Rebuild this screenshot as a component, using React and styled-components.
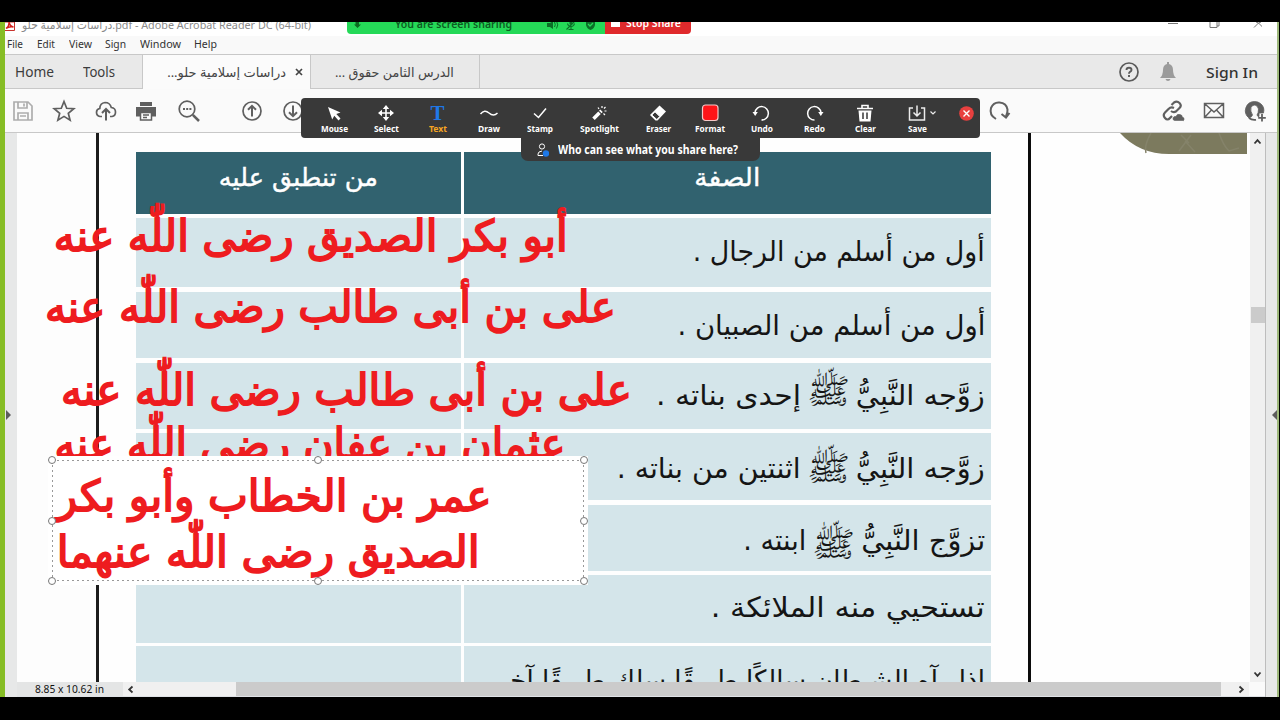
import React, { useLayoutEffect, useRef } from "react"
import styled, { createGlobalStyle } from "styled-components";

const MENU = [
  { label: 'File', w: 16, gap: 14 },
  { label: 'Edit', w: 18, gap: 14 },
  { label: 'View', w: 23, gap: 13 },
  { label: 'Sign', w: 21, gap: 14 },
  { label: 'Window', w: 41, gap: 13 },
  { label: 'Help', w: 23, gap: 0 },
]

const ROWS = [
  { h: 69, mt: 4, pad: 16, parts: [{ t: 'أول من أسلم من الرجال .', w: 292 }] },
  { h: 66, mt: 5, pad: 16, parts: [{ t: 'أول من أسلم من الصبيان .', w: 308 }] },
  { h: 66, mt: 5, pad: 15, parts: [{ t: 'زوَّجه النَّبِيُّ', w: 129 }, { t: 'ﷺ', w: 43, mark: true, mr: 6, lift: 5 }, { t: 'إحدى بناته .', w: 145, mr: 6 }] },
  { h: 67, mt: 4, pad: 18, parts: [{ t: 'زوَّجه النَّبِيُّ', w: 129 }, { t: 'ﷺ', w: 43, mark: true, mr: 6, lift: 1 }, { t: 'اثنتين من بناته .', w: 184, mr: 6 }] },
  { h: 66, mt: 5, pad: 18, parts: [{ t: 'تزوَّج النَّبِيُّ', w: 124 }, { t: 'ﷺ', w: 43, mark: true, mr: 6, lift: -3 }, { t: 'ابنته .', w: 63, mr: 6 }] },
  { h: 68, mt: 4, pad: 15, parts: [{ t: 'تستحيي منه الملائكة .', w: 274 }] },
  { h: 70, mt: 3, pad: 17, parts: [{ t: 'إذا رآه الشيطان سالكًا طريقًا سلك طريقًا آخر', w: 489 }] },
]

const NOTES = [
  { t: 'أبو بكر الصديق رضى اللّٰه عنه', x: 54, y: 208, w: 514 },
  { t: 'على بن أبى طالب رضى اللّٰه عنه', x: 45, y: 279, w: 571 },
  { t: 'على بن أبى طالب رضى اللّٰه عنه', x: 61, y: 362, w: 571 },
  { t: 'عثمان بن عفان رضى اللّٰه عنه', x: 54, y: 416, w: 511 },
]

// squeezes or stretches one line of text to an exact width
const FitText = ({ w, rtl, children, className }) => {
  const ref = useRef(null)

  useLayoutEffect(() => {
    const el = ref.current
    el.style.transform = 'none'
    const real = el.getBoundingClientRect().width
    if (real) el.style.transform = `scaleX(${w / real})`
  }, [w, children])

  return (
    <FitBox $w={w} className={className} dir={rtl ? 'rtl' : 'ltr'}>
      <FitInner ref={ref} $rtl={rtl}>{children}</FitInner>
    </FitBox>
  )
}

const TitleBar = () => (
  <Title>
    <PdfIcon width="10" height="9" viewBox="0 0 10 9">
      <path d="M0 0H9.500V8.500H0" fill="#fff" stroke="#c8322d" />
      <path d="M1 6.500Q4.500 4 4 0Q5 4.500 8.500 5Q4.500 4 1 6.500" stroke="#d3211c" strokeWidth="1.500" fill="none" />
    </PdfIcon>
    <TitleText w={289}>دراسات إسلامية حلو.pdf - Adobe Acrobat Reader DC (64-bit)</TitleText>
    <WindowButtons width="94" height="14" viewBox="0 0 94 14">
      <path d="M0 1.500H10M42 0V5.500H49V0M49 4H51V0M86 5.500L90.500 1L95 5.500M88 0L90.500 1L93 0" stroke="#777" fill="none" />
    </WindowButtons>
  </Title>
)

const SharingBar = () => (
  <Sharing>
    <SharingGreen>
      <svg width="9" height="8" viewBox="0 0 9 8"><path d="M2.500 0H6V2.500H8L4.500 6L1 2.500H2.500Z" fill="#0a6a20" /></svg>
      <SharingText w={117}>You are screen sharing</SharingText>
      <ShareIcons width="50" height="10" viewBox="0 0 50 10">
        <path d="M0 1H3L6 -1V7L3 5H0Z" fill="#0b6e27" />
        <path d="M7.500 0Q9 3 7.500 5M9.500 -1Q12 3 9.500 6.500" stroke="#0b6e27" fill="none" />
        <path d="M22.500 -1H25.500V2Q24 4 22.500 2Z" fill="#0b6e27" />
        <path d="M20.500 1.500Q21 4.500 24 4.500T27.500 1.500M24 4.500V7M21.500 7.500H26.500M19.500 7.500L28 -1" stroke="#0b6e27" strokeWidth="1.100" fill="none" />
        <path d="M39 -2H48V3Q47 7 43.500 8Q40 7 39 3Z" fill="#0b6e27" />
        <path d="M41 2L43 4L46 1" stroke="#25d958" strokeWidth="1.300" fill="none" />
      </ShareIcons>
    </SharingGreen>
    <SharingRed>
      <StopSquare />
      <StopText w={55}>Stop Share</StopText>
    </SharingRed>
  </Sharing>
)

const Tabs = () => (
  <TabStrip>
    <HomeArea>
      <BigLabel w={39}>Home</BigLabel>
      <BigLabel w={32}>Tools</BigLabel>
    </HomeArea>
    <Tab $w={168} $active>
      <TabText w={119} rtl>دراسات إسلامية حلو...</TabText>
      <svg width="8" height="8" viewBox="0 0 8 8"><path d="M1 1L7 7M7 1L1 7" stroke="#444" strokeWidth="1.700" /></svg>
    </Tab>
    <Tab $w={169}>
      <TabText w={119} rtl>الدرس الثامن حقوق ...</TabText>
    </Tab>
    <TabRest>
      <svg width="20" height="20" viewBox="0 0 20 20" fill="none" stroke="#5a5a5a">
        <circle cx="10" cy="10" r="9" strokeWidth="1.700" />
        <path d="M7.500 8Q7.500 5.800 10 5.800T12.500 8Q12.500 9 11 9.800Q10 10.400 10 11.800M10 13V15" strokeWidth="1.900" />
      </svg>
      <svg width="16" height="19" viewBox="0 0 16 19" fill="#9b9b9b">
        <path d="M7 0H9V2Q13 3 13 8Q13 13 16 16H0Q3 13 3 8Q3 3 7 2ZM5.500 17H10.500Q10 19 8 19T5.500 17Z" />
      </svg>
      <SignIn w={52}>Sign In</SignIn>
    </TabRest>
  </TabStrip>
)

const MainTools = () => (
  <ToolRow>
    <Icon $mr={17} $dim>
      <path d="M3 3H17L21 7V21H3ZM7 3V9H16V3M13 4.500V7.500M7 21V14H17V21M9 17H15" />
    </Icon>
    <Icon $mr={18}><path d="M12 2.500L14.700 9.300L21.800 9.700L16.300 14.300L18.100 21.200L12 17.400L5.900 21.200L7.700 14.300L2.200 9.700L9.300 9.300Z" /></Icon>
    <Icon $mr={16}>
      <path d="M8 17.500H6Q2.500 17 2.500 13.300Q2.500 10 5.800 9.500Q6 4 11 3.500Q16 3.500 17.300 8.500Q21.500 9 21.500 13Q21.500 17 18 17.500H16" />
      <path d="M12 21.500V10.500M8 14L12 10L16 14" strokeWidth="2" />
    </Icon>
    <Icon $mr={19}>
      <path d="M6 3H18V7H6Z" fill="#5f5f5f" stroke="none" />
      <path d="M2 8H22V17.500H18V13H6V17.500H2Z" fill="#5f5f5f" stroke="none" />
      <path d="M6.500 13.500H17.500V21H6.500ZM9 16H15M9 18.500H13" strokeWidth="1.500" />
    </Icon>
    <Icon $mr={39}>
      <circle cx="10" cy="10" r="7.800" />
      <path d="M15.800 15.800L22 22" strokeWidth="2.500" />
      <path d="M6 10H8M9.200 10H11.200M12.400 10H14.400" strokeWidth="2" />
    </Icon>
    <Icon $mr={17}><circle cx="12" cy="12" r="9" /><path d="M12 17.500V7M8 10.800L12 6.800L16 10.800" strokeWidth="2" /></Icon>
    <Icon $mr={682}><circle cx="12" cy="12" r="9" /><path d="M12 6.500V17M8 13.200L12 17.200L16 13.200" strokeWidth="2" /></Icon>
    <Icon $mr={150}><path d="M9 20Q2 16 4 9Q6.500 3 12.500 3.500Q19.500 4 20.500 10.500Q20.800 13.500 19 17.500M14.500 15L19 18.500L22.500 14" strokeWidth="2" /></Icon>
    <Icon $mr={17}>
      <path d="M10.500 6L13 3.500Q16 1.500 18.500 4T18.500 9L15 12.500Q12.500 14 10 12M13 9Q10 7.500 7.500 10L4 13.500Q1.500 16 4 19T9 19L11 17" strokeWidth="2.200" />
      <path d="M13.500 21.500Q11.500 21 12 19T15 17.500Q16 14.500 19 15.500T21 18Q23.500 18.500 23 20.500T21.500 21.500Z" fill="#5f5f5f" strokeWidth=".6" />
    </Icon>
    <Icon $mr={17}><path d="M2.500 4.500H21.500V18.500H2.500ZM3 5L12 13L21 5M3 18L9.500 11M21 18L14.500 11" strokeWidth="1.500" /></Icon>
    <Icon $mr={0}>
      <path d="M11.500 2.500A9.200 9.200 0 0 0 6 19Q9 18 9.500 16Q7 12 8 8.500Q9.500 5.500 12 6T15.500 10Q15.500 14 14 16L15 17.500H16V14H20.500Q22 8 17.500 4.500Q15 2.500 11.500 2.500Z" fill="#5f5f5f" strokeWidth=".8" />
      <path d="M6 19Q9 21.500 13 20.800M19 15V22.500M15.200 18.800H22.800" strokeWidth="1.800" />
    </Icon>
  </ToolRow>
)

const ZoomBar = () => (
  <ZoomPanel>
    <ZoomItem $w={52}>
      <ZIcon><path d="M4 4L16.500 9.500L12.300 11L16.500 15.500L14.500 17.500L10.300 12.800L8.200 16.500Z" fill="#fff" stroke="none" /></ZIcon>
      <ZoomLabel w={27}>Mouse</ZoomLabel>
    </ZoomItem>
    <ZoomItem $w={52}>
      <ZIcon><path d="M10 4V16M4 10H16" strokeWidth="1.600" /><path d="M10 2L13.200 6H6.800ZM10 18L6.800 14H13.200ZM2 10L6 6.800V13.200ZM18 10L14 13.200V6.800Z" fill="#fff" stroke="none" /></ZIcon>
      <ZoomLabel w={25}>Select</ZoomLabel>
    </ZoomItem>
    <ZoomItem $w={51}>
      <BigT>T</BigT>
      <ZoomLabel w={18} $on>Text</ZoomLabel>
    </ZoomItem>
    <ZoomItem $w={52}>
      <ZIcon><path d="M1.500 11Q5.500 6 10 10T18.500 10" strokeWidth="1.400" /></ZIcon>
      <ZoomLabel w={22}>Draw</ZoomLabel>
    </ZoomItem>
    <ZoomItem $w={50}>
      <ZIcon><path d="M4 10.500L8.500 14.500L16 5.500" strokeWidth="1.500" /></ZIcon>
      <ZoomLabel w={26}>Stamp</ZoomLabel>
    </ZoomItem>
    <ZoomItem $w={68}>
      <ZIcon>
        <path d="M4.500 15.800L10.500 9.800" strokeWidth="3.600" />
        <path d="M11.300 9L12.500 7.800" strokeWidth="3.600" />
        <path d="M9 4.500L10 6M13 3V5M16.500 4L15 5.500M15.500 8H17.500M14.500 10.500L16 12" strokeWidth="1.200" />
      </ZIcon>
      <ZoomLabel w={39}>Spotlight</ZoomLabel>
    </ZoomItem>
    <ZoomItem $w={50}>
      <ZIcon>
        <path d="M11.500 2.500L18 8.500L9.500 17.500H7.500L2 12Z" fill="#fff" stroke="none" />
        <path d="M7 8.800L11.800 13.500L8.800 16.500L3.800 12Z" fill="#393939" stroke="#fff" strokeWidth="1" />
      </ZIcon>
      <ZoomLabel w={25}>Eraser</ZoomLabel>
    </ZoomItem>
    <ZoomItem $w={54}>
      <ZIcon><rect x="2.500" y="2" width="15.500" height="15.500" rx="3" fill="#ff1418" stroke="#f5c9c9" strokeWidth="1.200" /></ZIcon>
      <ZoomLabel w={30}>Format</ZoomLabel>
    </ZoomItem>
    <ZoomItem $w={50}>
      <ZIcon><path d="M3 9.500A6.700 6.700 0 1 1 9.500 17" strokeWidth="1.500" /><path d="M.5 9H5.800L3.200 13Z" fill="#fff" stroke="none" /></ZIcon>
      <ZoomLabel w={22}>Undo</ZoomLabel>
    </ZoomItem>
    <ZoomItem $w={54}>
      <ZIcon><path d="M17 9.500A6.700 6.700 0 1 0 10.500 17" strokeWidth="1.500" /><path d="M19.500 9H14.200L16.800 13Z" fill="#fff" stroke="none" /></ZIcon>
      <ZoomLabel w={21}>Redo</ZoomLabel>
    </ZoomItem>
    <ZoomItem $w={48}>
      <ZIcon><path d="M2 5.500H18M7 5V2.500H13V5" strokeWidth="1.600" /><path d="M3.500 7.500H16.500L15.500 18.500H4.500Z" fill="#fff" stroke="none" /><path d="M8 9.500V16M12 9.500V16" stroke="#393939" strokeWidth="1.500" /></ZIcon>
      <ZoomLabel w={21}>Clear</ZoomLabel>
    </ZoomItem>
    <ZoomItem $w={56}>
      <SaveIcon width="34" height="20" viewBox="-7 0 34 20" fill="none" stroke="#ececec">
        <path d="M6 5H2.500V17H17.500V5H14M10 2.500V13M6.500 9.500L10 13L13.500 9.500" strokeWidth="1.500" />
        <path d="M23.500 8.500L26 11L28.500 8.500" strokeWidth="1.200" />
      </SaveIcon>
      <ZoomLabel w={19}>Save</ZoomLabel>
    </ZoomItem>
    <CloseIcon width="15" height="15" viewBox="0 0 15 15">
      <circle cx="7.500" cy="7.500" r="7.300" fill="#e8403f" />
      <path d="M4.500 4.500L10.500 10.500M10.500 4.500L4.500 10.500" stroke="#fff" strokeWidth="1.400" />
    </CloseIcon>
    <WhoCanSee>
      <svg width="14" height="14" viewBox="0 0 14 14" fill="none" stroke="#fff">
        <circle cx="7" cy="3.500" r="2.600" />
        <path d="M8 12.500H3V11Q3 8.500 7 8" />
        <circle cx="11" cy="10.500" r="3.200" fill="#1e78e6" stroke="none" />
      </svg>
      <WhoText w={180}>Who can see what you share here?</WhoText>
    </WhoCanSee>
  </ZoomPanel>
)

const Lesson = () => (
  <Page>
    <Corner width="130" height="22" viewBox="0 0 130 22">
      <path d="M1 0H128V21H50Q20 21 1 0Z" fill="#7c7a5e" />
      <path d="M32 0Q25 12 27 20M60 18L72 2M66 8L76 19M62 2L70 10M100 0Q104 12 110 18L120 15" stroke="#85836a" strokeWidth="1.500" fill="none" />
    </Corner>
    <Table>
      <Row $h={62} $mt={0}>
        <Head><HeadText w={159} rtl>من تنطبق عليه</HeadText></Head>
        <Head><HeadText w={66} rtl>الصفة</HeadText></Head>
      </Row>
      {ROWS.map((row, i) => (
        <Row key={i} $h={row.h} $mt={row.mt}>
          <Cell />
          <Cell dir="rtl" $pad={row.pad}>
            {row.parts.map((p, k) => p.mark
              ? <Mark key={k} w={p.w} rtl $mr={p.mr} $lift={p.lift}>{p.t}</Mark>
              : <Phrase key={k} w={p.w} rtl $mr={p.mr}>{p.t}</Phrase>)}
          </Cell>
        </Row>
      ))}
    </Table>
  </Page>
)

const HANDLES = [[0, 0], [50, 0], [100, 0], [0, 50], [100, 50], [0, 100], [50, 100], [100, 100]]

const Annotations = () => (
  <>
    {NOTES.map((n, i) => (
      <Note key={i} $x={n.x} $y={n.y}><RedText w={n.w} rtl>{n.t}</RedText></Note>
    ))}
    <TextBox>
      <Dotted>
        <RedText w={435} rtl>عمر بن الخطاب وأبو بكر</RedText>
        <RedText w={423} rtl>الصديق رضى اللّٰه عنهما</RedText>
        {HANDLES.map(([x, y]) => <Handle key={`${x}-${y}`} $x={x} $y={y} />)}
      </Dotted>
    </TextBox>
  </>
)

const App = () => {
  return (
    <Screen>
      <GlobalStyle />
      <Desktop>
        <Window>
          <TitleBar />
          <Menu>
            {MENU.map((m) => <MenuText key={m.label} w={m.w} $gap={m.gap}>{m.label}</MenuText>)}
          </Menu>
          <Tabs />
          <MainTools />
          <Body>
            <SidePanel $w={12}><Arrow /></SidePanel>
            <Center>
              <View>
                <Lesson />
                <VScroll>
                  <Chevron $turn={0} />
                  <VThumb />
                  <Chevron $turn={180} />
                </VScroll>
              </View>
              <Bottom>
                <PageSize><SizeText w={69}>8.85 x 10.62 in</SizeText></PageSize>
                <Chevron $turn={270} />
                <HThumb />
                <Chevron $turn={90} />
                <ScrollCorner />
              </Bottom>
            </Center>
            <SidePanel $w={12} $right><Arrow $left /></SidePanel>
          </Body>
        </Window>
      </Desktop>
      <SharingBar />
      <Annotations />
      <ZoomBar />
    </Screen>
  );
}

const Chevron = ({ $turn }) => (
  <ChevronBox $turn={$turn} width="15" height="15" viewBox="0 0 15 15">
    <path d="M4.500 9.500L7.500 6.200L10.500 9.500" stroke="#333" strokeWidth="1.800" fill="none" />
  </ChevronBox>
)

const GlobalStyle = createGlobalStyle`
  body {
    margin: 0;
    background: #000;
    font-family: "Noto Sans", "DejaVu Sans", sans-serif;
  }
  * { box-sizing: border-box; }
  svg { display: block; flex: none; }
`;

const Screen = styled.div`
  position: relative;
  width: 1280px;
  height: 720px;
  padding: 22px 0 23px;
  overflow: hidden;
  background: #000;
`;

const Desktop = styled.div`
  height: 675px;
  width: 1279px;
  padding: 0 2px 0 5px;
  background: linear-gradient(90deg, #86bd25 0 640px, #9fb97c 640px);
`;

const Window = styled.div`
  height: 100%;
  display: flex;
  flex-direction: column;
  overflow: hidden;
  background: #fdfdfd;
`;

const FitBox = styled.span`
  display: block;
  flex: none;
  width: ${(p) => p.$w}px;
  white-space: nowrap;
`;

const FitInner = styled.span`
  display: inline-block;
  transform-origin: ${(p) => (p.$rtl ? 'right' : 'left')} center;
`;

const Title = styled.div`
  display: flex;
  height: 14px;
  overflow: hidden;
  background: #fff;
`;

const PdfIcon = styled.svg`
  margin-right: 7px;
`;

const TitleText = styled(FitText)`
  color: #8a8a8a;
  font-size: 11.500px;
  line-height: 16px;
  margin-top: -5px;
`;

const WindowButtons = styled.svg`
  margin-left: 857px;
`;

const Menu = styled.div`
  display: flex;
  height: 18px;
  padding-left: 2px;
  background: #f9f9f9;
`;

const MenuText = styled(FitText)`
  margin-right: ${(p) => p.$gap}px;
  color: #333;
  font-size: 11px;
  line-height: 16px;
`;

const TabStrip = styled.div`
  display: flex;
  height: 35px;
  border-top: 1px solid #c8c8c8;
`;

const HomeArea = styled.div`
  display: flex;
  align-items: center;
  gap: 29px;
  width: 138px;
  padding: 0 0 0 10px;
  background: #e9e9e9;
  border-right: 1px solid #c8c8c8;
  border-bottom: 1px solid #c8c8c8;
`;

const BigLabel = styled(FitText)`
  color: #3c3c3c;
  font-size: 14px;
  line-height: 20px;
`;

const Tab = styled.div`
  display: flex;
  align-items: center;
  gap: 9px;
  width: ${(p) => p.$w}px;
  padding-left: 24px;
  background: ${(p) => (p.$active ? '#fbfbfb' : '#e9e9e9')};
  border-right: 1px solid #c8c8c8;
  border-bottom: ${(p) => (p.$active ? 'none' : '1px solid #c8c8c8')};
`;

const TabText = styled(FitText)`
  color: #444;
  font-size: 13px;
  line-height: 20px;
`;

const TabRest = styled.div`
  flex: 1;
  display: flex;
  align-items: center;
  justify-content: flex-end;
  padding-right: 19px;
  background: #e9e9e9;
  border-bottom: 1px solid #c8c8c8;

  svg + svg { margin: 0 30px 0 21px; }
`;

const SignIn = styled(FitText)`
  color: #333;
  font-size: 15px;
  font-weight: 500;
  line-height: 20px;
`;

const ToolRow = styled.div`
  display: flex;
  align-items: center;
  height: 44px;
  padding-left: 6px;
  background: #fafafa;
  border-bottom: 1px solid #c8c8c8;
`;

const Icon = styled.svg.attrs({ viewBox: '0 0 24 24' })`
  width: 24px;
  height: 24px;
  margin-right: ${(p) => p.$mr}px;
  fill: none;
  stroke: ${(p) => (p.$dim ? '#adadad' : '#5f5f5f')};
  stroke-width: 1.7;
`;

const Body = styled.div`
  flex: 1;
  display: flex;
  min-height: 0;
`;

const SidePanel = styled.div`
  display: flex;
  align-items: center;
  justify-content: ${(p) => (p.$right ? 'flex-end' : 'flex-start')};
  width: ${(p) => p.$w}px;
  background: #e7e8e8;
  border-left: ${(p) => (p.$right ? '1px solid #bdbdbd' : 'none')};
`;

const Arrow = styled.div`
  border: 5px solid transparent;
  border-width: 5px 0;
  ${(p) => (p.$left ? 'border-right: 5px solid #5c5c5c;' : 'margin-left: 1px; border-left: 5px solid #5c5c5c;')}
`;

const Center = styled.div`
  flex: 1;
  display: flex;
  flex-direction: column;
  min-width: 0;
`;

const View = styled.div`
  flex: 1;
  display: flex;
  min-height: 0;
`;

const Page = styled.div`
  position: relative;
  flex: 1;
  overflow: hidden;
  padding: 0 0 0 37px;
  margin-left: 79px;
  background: #fefefe;
  border-left: 3px solid #1c1c1c;
`;

const Corner = styled.svg`
  position: absolute;
  right: 1px;
  top: 0;
`;

const Table = styled.div`
  width: 895px;
  height: 620px;
  padding-top: 19px;
  border-right: 3px solid #0c0c0c;
`;

const Row = styled.div`
  display: grid;
  grid-template-columns: 325px 527px;
  column-gap: 3px;
  height: ${(p) => p.$h}px;
  margin-top: ${(p) => p.$mt}px;
`;

const Head = styled.div`
  display: flex;
  justify-content: center;
  padding-top: 6px;
  background: #31626f;
`;

const HeadText = styled(FitText)`
  color: #fff;
  font-family: "DejaVu Sans", sans-serif;
  font-size: 25px;
  line-height: 40px;
  -webkit-text-stroke: .4px #fff;
`;

const Cell = styled.div`
  display: flex;
  align-items: flex-start;
  padding: ${(p) => p.$pad || 0}px 6px 0 0;
  background: #d4e5ea;
`;

const Phrase = styled(FitText)`
  margin-right: ${(p) => p.$mr || 0}px;
  color: #151515;
  font-family: "DejaVu Sans", sans-serif;
  font-size: 28px;
  line-height: 36px;
`;

const Mark = styled(Phrase)`
  margin-top: ${(p) => -p.$lift}px;
  font-size: 34px;
`;

const VScroll = styled.div`
  display: flex;
  flex-direction: column;
  align-items: center;
  width: 15px;
  padding: 1px 0 0;
  background: #f0f0f0;
`;

const VThumb = styled.div`
  width: 14px;
  height: 16px;
  margin: 158px 0 auto;
  background: #cbcbcb;
`;

const ChevronBox = styled.svg`
  transform: rotate(${(p) => p.$turn}deg);
`;

const Bottom = styled.div`
  display: flex;
  height: 15px;
  background: #f0f0f0;
  border-bottom: 1px solid #dfe2e6;
`;

const PageSize = styled.div`
  width: 106px;
  padding-left: 18px;
  background: #e4e5e5;
`;

const SizeText = styled(FitText)`
  color: #111;
  font-size: 10.500px;
  line-height: 14px;
`;

const HThumb = styled.div`
  width: 985px;
  margin: 0 13px 0 98px;
  background: #cbcbcb;
`;

const ScrollCorner = styled.div`
  flex: 1;
  background: #fafafa;
`;

const Sharing = styled.div`
  position: absolute;
  left: 347px;
  top: 22px;
  display: flex;
  width: 344px;
  height: 12px;
  overflow: hidden;
  border-radius: 0 0 4px 4px;
`;

const SharingGreen = styled.div`
  display: flex;
  width: 258px;
  padding-left: 6px;
  background: #25d958;
`;

const SharingText = styled(FitText)`
  margin: -6px 0 0 33px;
  color: #0d5c22;
  font-size: 11.500px;
  font-weight: 600;
  line-height: 16px;
`;

const ShareIcons = styled.svg`
  margin-left: 35px;
`;

const SharingRed = styled.div`
  display: flex;
  flex: 1;
  padding-left: 6px;
  background: #e02a2c;
`;

const StopSquare = styled.div`
  width: 9px;
  height: 5px;
  background: #fff;
`;

const StopText = styled(FitText)`
  margin: -7px 0 0 6px;
  color: #fff;
  font-size: 11.500px;
  font-weight: 600;
  line-height: 16px;
`;

const ZoomPanel = styled.div`
  position: absolute;
  left: 301px;
  top: 98px;
  display: flex;
  width: 679px;
  height: 40px;
  padding-left: 7px;
  background: #393939;
  border-radius: 4px;
`;

const ZoomItem = styled.div`
  display: flex;
  flex-direction: column;
  align-items: center;
  width: ${(p) => p.$w}px;
  padding-top: 5px;
`;

const ZIcon = styled.svg.attrs({ viewBox: '0 0 20 20' })`
  width: 20px;
  height: 20px;
  fill: none;
  stroke: #fff;
`;

const SaveIcon = styled.svg`
  overflow: visible;
`;

const BigT = styled.div`
  height: 20px;
  color: #1f78e8;
  font-family: "Liberation Serif", serif;
  font-size: 21px;
  font-weight: bold;
  line-height: 20px;
`;

const ZoomLabel = styled(FitText)`
  color: ${(p) => (p.$on ? '#f5a623' : '#fff')};
  font-size: 8.500px;
  font-weight: bold;
  line-height: 11px;
`;

const CloseIcon = styled.svg`
  margin: 8px 0 0 14px;
`;

const WhoCanSee = styled.div`
  position: absolute;
  left: 220px;
  top: 40px;
  display: flex;
  align-items: center;
  gap: 9px;
  width: 239px;
  height: 23px;
  padding-left: 14px;
  background: #393939;
  border-radius: 0 0 7px 7px;
`;

const WhoText = styled(FitText)`
  color: #fff;
  font-size: 11.500px;
  font-weight: bold;
  line-height: 18px;
`;

const Note = styled.div`
  position: absolute;
  left: ${(p) => p.$x}px;
  top: ${(p) => p.$y}px;
`;

const RedText = styled(FitText)`
  color: #ee1c1f;
  font-family: "DejaVu Sans", sans-serif;
  font-size: 43px;
  line-height: 56px;
  -webkit-text-stroke: 1.8px #ee1c1f;
`;

const TextBox = styled.div`
  position: absolute;
  left: 48px;
  top: 456px;
  width: 540px;
  height: 129px;
  padding: 4px;
  background: #fff;
`;

const dotsX = 'repeating-linear-gradient(90deg, #999 0 2px, transparent 2px 5px)'
const dotsY = 'repeating-linear-gradient(180deg, #999 0 2px, transparent 2px 5px)'

const Dotted = styled.div`
  position: relative;
  width: 532px;
  height: 121px;
  padding: 8px 0 0 5px;
  background:
    ${dotsX} top / 100% 1px no-repeat,
    ${dotsX} bottom / 100% 1px no-repeat,
    ${dotsY} left / 1px 100% no-repeat,
    ${dotsY} right / 1px 100% no-repeat;
`;

const Handle = styled.div`
  position: absolute;
  left: calc(${(p) => p.$x}% - 4px);
  top: calc(${(p) => p.$y}% - 4px);
  width: 8px;
  height: 8px;
  background: #fff;
  border: 1px solid #777;
  border-radius: 50%;
`;

export default App;
